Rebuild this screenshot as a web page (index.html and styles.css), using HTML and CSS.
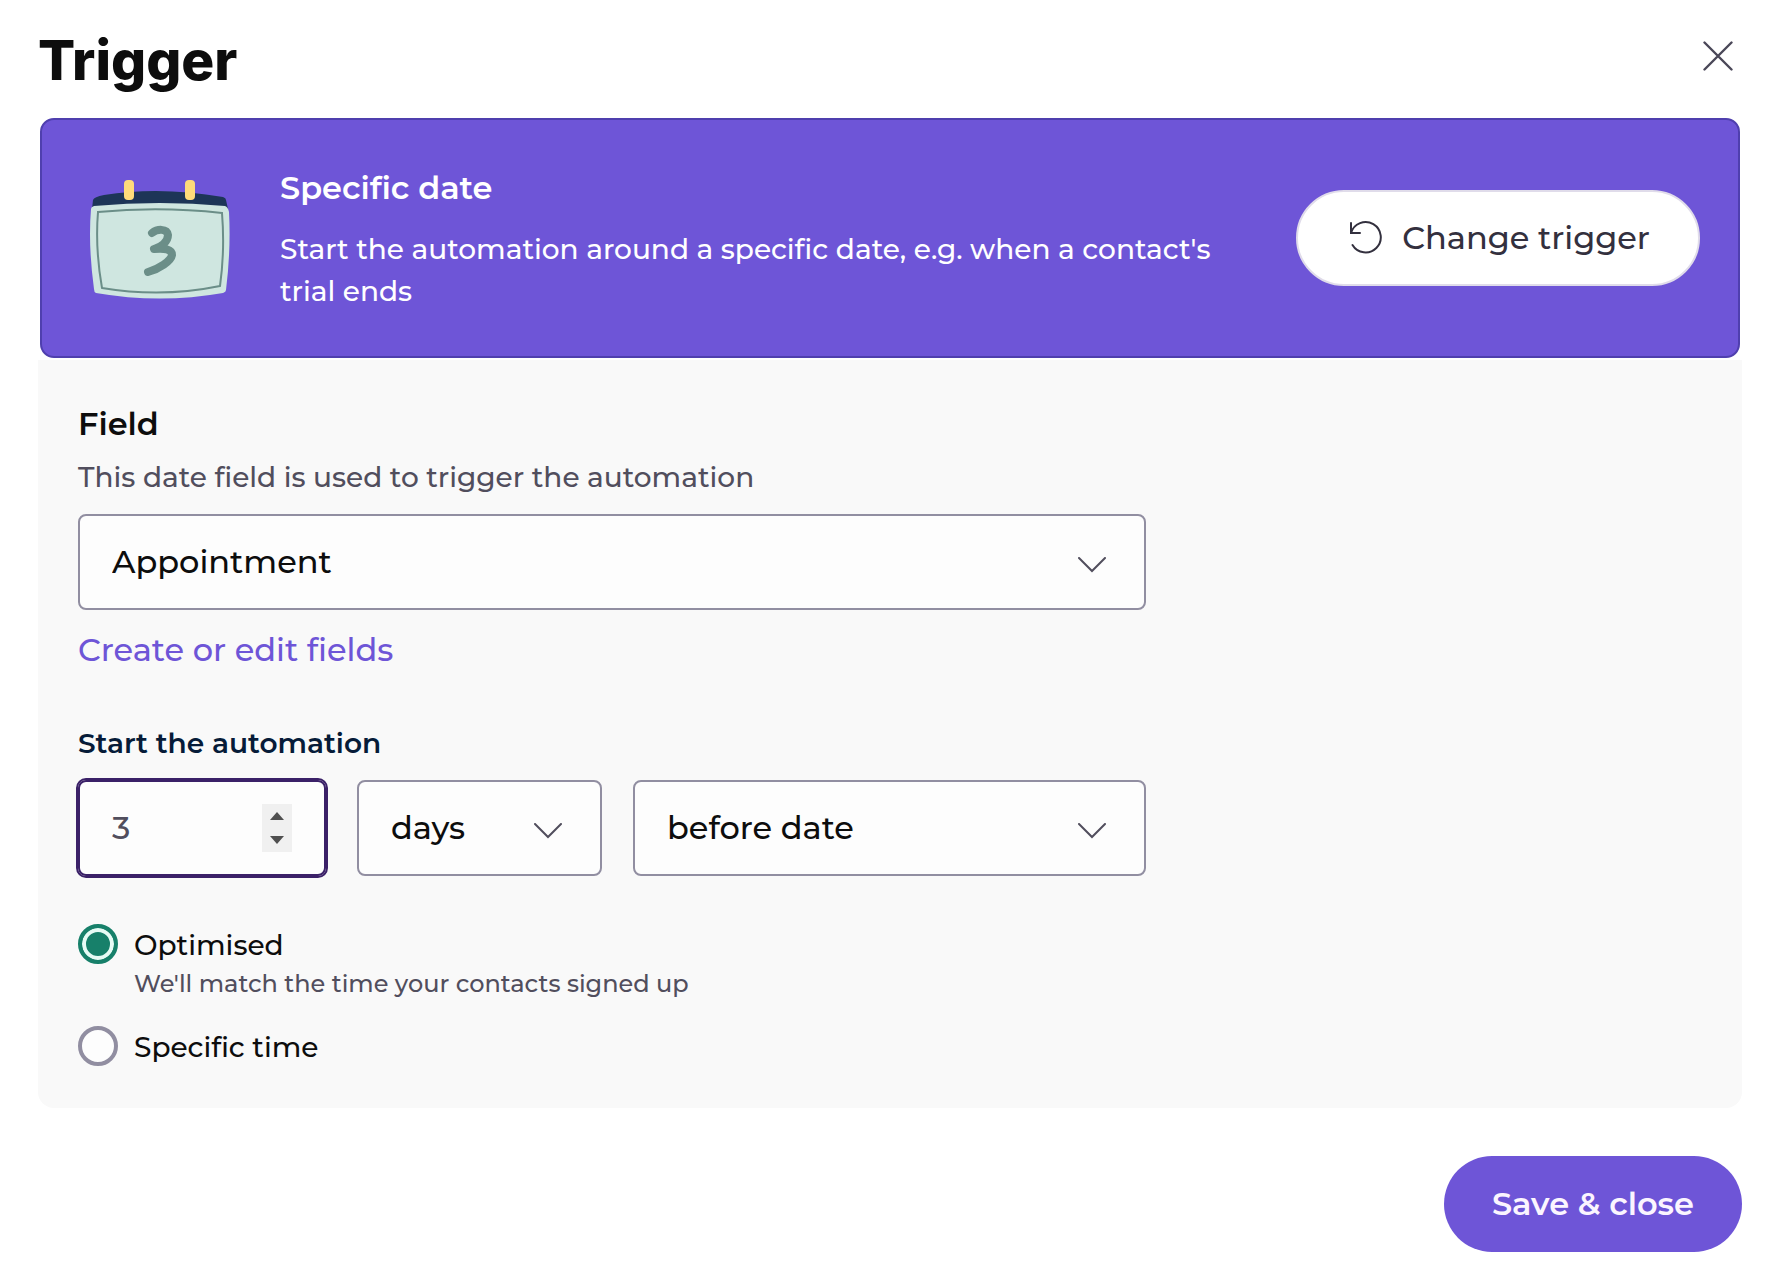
FILE: index.html
```html
<!DOCTYPE html>
<html lang="en">
<head>
    <meta charset="UTF-8">
    <meta name="viewport" content="width=device-width, initial-scale=1.0">
    <title>Trigger</title>
    <link rel="stylesheet" href="styles.css">
</head>
<body>
    <main class="modal">
        <header class="modal-header">
            <h1 class="title">Trigger</h1>
            <button class="close" type="button" aria-label="Close">
                <svg width="30" height="30" viewBox="0 0 30 30"><path d="M1.500 1.500l27 27M28.500 1.500L1.500 28.500"/></svg>
            </button>
        </header>

        <!-- Selected trigger -->
        <section class="banner">
            <svg class="calendar" width="140" height="120" viewBox="0 0 140 120">
                <path fill="#1d3557" d="M2 29L3 20Q4 17 14 15Q70 6 133 17Q136 18 136 20L138 29Z"/>
                <path fill="#cfe6e0" d="M1 29Q1 27 4 26Q70 20 135 26Q138 27 139 32Q141 70 136 110Q136 112 133 113Q70 124 6 113Q4 112 4 109Q-2 65 1 29Z"/>
                <path fill="none" stroke="#6b8e88" stroke-width="2" d="M8 32Q70 26 132 33Q135 70 130 106Q72 118 12 108Q5 68 8 32Z"/>
                <rect fill="#ffdb7a" x="34" y="0" width="10" height="20" rx="4"/>
                <rect fill="#ffdb7a" x="95" y="0" width="10" height="20" rx="4"/>
                <path fill="none" stroke="#6b8e88" stroke-width="8" stroke-linecap="round" stroke-linejoin="round" d="M62 53C67 49 77 48 78 55C78 62 71 67 64 69C74 68 82 69 82 75C81 81 69 89 58 92"/>
            </svg>
            <div class="banner-text">
                <h2>Specific date</h2>
                <p>Start the automation around a specific date, e.g. when a contact's trial ends</p>
            </div>
            <button class="btn btn-light" type="button">
                <svg width="32" height="34" viewBox="0 -2 32 34"><path d="M1 1v10h9M1 11A15.200 15.200 0 1 1 2.500 23"/></svg>
                Change trigger
            </button>
        </section>

        <form class="panel" id="trigger-form">
            <div class="fields">
                <label class="label" for="field">Field</label>
                <p class="hint" id="field-hint">This date field is used to trigger the automation</p>
                <div class="control">
                    <select id="field" aria-describedby="field-hint">
                        <option>Appointment</option>
                    </select>
                    <svg class="chevron" width="28" height="16" viewBox="0 0 28 16"><path d="M1 1l13 13L27 1"/></svg>
                </div>
                <a class="link" href="#">Create or edit fields</a>

                <label class="sub-label" for="amount">Start the automation</label>
                <div class="timing">
                    <div class="control">
                        <input class="number" id="amount" type="number" value="3" min="0">
                        <div class="spinner">
                            <button type="button" aria-label="Increase" onclick="document.getElementById('amount').stepUp()">
                                <svg width="14" height="8" viewBox="0 0 14 8"><path d="M0 8l7-8 7 8z"/></svg>
                            </button>
                            <button type="button" aria-label="Decrease" onclick="document.getElementById('amount').stepDown()">
                                <svg width="14" height="8" viewBox="0 0 14 8"><path d="M0 0l7 8 7-8z"/></svg>
                            </button>
                        </div>
                    </div>
                    <div class="control">
                        <select aria-label="Unit">
                            <option>days</option>
                        </select>
                        <svg class="chevron" width="28" height="16" viewBox="0 0 28 16"><path d="M1 1l13 13L27 1"/></svg>
                    </div>
                    <div class="control">
                        <select aria-label="Before or after">
                            <option>before date</option>
                        </select>
                        <svg class="chevron" width="28" height="16" viewBox="0 0 28 16"><path d="M1 1l13 13L27 1"/></svg>
                    </div>
                </div>

                <div class="radios">
                    <label class="radio">
                        <input type="radio" name="time" checked>
                        <span>Optimised<small>We'll match the time your contacts signed up</small></span>
                    </label>
                    <label class="radio">
                        <input type="radio" name="time">
                        <span>Specific time</span>
                    </label>
                </div>
            </div>
        </form>

        <footer class="modal-footer">
            <button class="btn btn-primary" type="submit" form="trigger-form">Save &amp; close</button>
        </footer>
    </main>
</body>
</html>
```

FILE: styles.css
```css
* {
    box-sizing: border-box;
}
body {
    margin: 0;
    background-color: #fff;
    color: #0d0d0d;
    font-family: Montserrat, Inter, "Liberation Sans", sans-serif;
    font-size: 32px;
    font-weight: 500;
}
h1, h2, p {
    margin: 0;
}
button, input, select {
    font: inherit;
    margin: 0;
}
.modal {
    padding: 24px 26px 34px 38px;
}
.modal-header {
    display: flex;
    justify-content: space-between;
    align-items: flex-start;
    height: 94px;
}
.title {
    font-family: Inter, "Liberation Sans", sans-serif;
    font-size: 55px;
    font-weight: 800;
    line-height: 72px;
}
.close {
    display: flex;
    align-items: center;
    justify-content: center;
    width: 48px;
    height: 64px;
    padding: 0;
    background: none;
    border: none;
    cursor: pointer;
}
.close svg {
    fill: none;
    stroke: #4a4758;
    stroke-width: 2.4;
    stroke-linecap: round;
}

/* Banner */
.banner {
    display: flex;
    align-items: center;
    min-height: 240px;
    margin: 0 2px 2px;
    padding: 0 38px 0 48px;
    background-color: #6e55d7;
    border: 2px solid #4f3fae;
    border-radius: 14px;
    color: #fff;
}
.calendar,
.banner-text {
    margin-top: 4px;
}
.calendar {
    flex: none;
    margin-right: 50px;
}
.banner-text {
    flex: 1;
    margin-right: 64px;
}
.banner-text h2 {
    font-size: 32px;
    font-weight: 600;
    line-height: 40px;
    margin-bottom: 20px;
}
.banner-text p {
    font-size: 28px;
    line-height: 42px;
}
.btn {
    display: flex;
    align-items: center;
    justify-content: center;
    height: 96px;
    padding: 0 48px 2px;
    border: none;
    border-radius: 48px;
    white-space: nowrap;
    cursor: pointer;
}
.btn-light {
    gap: 20px;
    padding-left: 52px;
    background-color: #fff;
    border: 2px solid #e0dcea;
    color: #33303e;
}
.btn-light svg {
    fill: none;
    stroke: #33303e;
    stroke-width: 2;
    stroke-linecap: round;
}
.btn-primary {
    background-color: #6e55d7;
    color: #fbf5ff;
    font-weight: 600;
}

/* Settings */
.panel {
    padding: 44px 40px 40px;
    background-color: #f9f9f9;
    border-radius: 0 0 16px 16px;
}
.fields {
    max-width: 1068px;
}
.label {
    display: block;
    font-weight: 600;
    line-height: 40px;
}
.hint {
    margin: 16px 0 20px;
    color: #514e5d;
    font-size: 28px;
    line-height: 34px;
}
.control {
    position: relative;
}
.control select,
.number {
    display: block;
    width: 100%;
    height: 96px;
    padding: 0 32px 2px;
    background-color: #fdfdfd;
    border: 2px solid #918ea1;
    border-radius: 8px;
    color: #0d0d0d;
    appearance: none;
}
.control .number {
    border-color: #3b2168;
    outline: 2px solid #3b2168;
    color: #514e5d;
    appearance: textfield;
}
.number::-webkit-inner-spin-button {
    display: none;
}
.chevron {
    position: absolute;
    top: 43px;
    right: 40px;
    fill: none;
    stroke: #514e5d;
    stroke-width: 2;
    stroke-linecap: round;
    pointer-events: none;
}
.spinner {
    position: absolute;
    top: 24px;
    right: 34px;
    display: flex;
    flex-direction: column;
    width: 30px;
    height: 48px;
    background-color: #f0f0f0;
}
.spinner button {
    display: flex;
    flex: 1;
    align-items: center;
    justify-content: center;
    padding: 0;
    background: none;
    border: none;
}
.spinner svg {
    fill: #4f4f4f;
}
.link {
    display: block;
    width: fit-content;
    margin: 20px 0 54px;
    color: #6e55d7;
    line-height: 40px;
    text-decoration: none;
}
.sub-label {
    display: block;
    margin-bottom: 18px;
    color: #061b38;
    font-size: 28px;
    font-weight: 600;
    line-height: 38px;
}
.timing {
    display: grid;
    grid-template-columns: 248px 245px 1fr;
    gap: 31px;
}
.radios {
    display: grid;
    gap: 24px;
    margin-top: 48px;
}
.radio {
    display: flex;
    gap: 16px;
    font-size: 28px;
    line-height: 42px;
}
.radio input {
    flex: none;
    width: 40px;
    height: 40px;
    background-color: #fdfdfd;
    border: 4px solid #918ea1;
    border-radius: 50%;
    appearance: none;
}
.radio input:checked {
    background-color: #17806a;
    border-color: #17806a;
    box-shadow: inset 0 0 0 4px #e6fbf5;
}
.radio small {
    display: block;
    color: #514e5d;
    font-size: 24px;
    line-height: 36px;
}

.modal-footer {
    display: flex;
    justify-content: flex-end;
    margin-top: 48px;
}
```
